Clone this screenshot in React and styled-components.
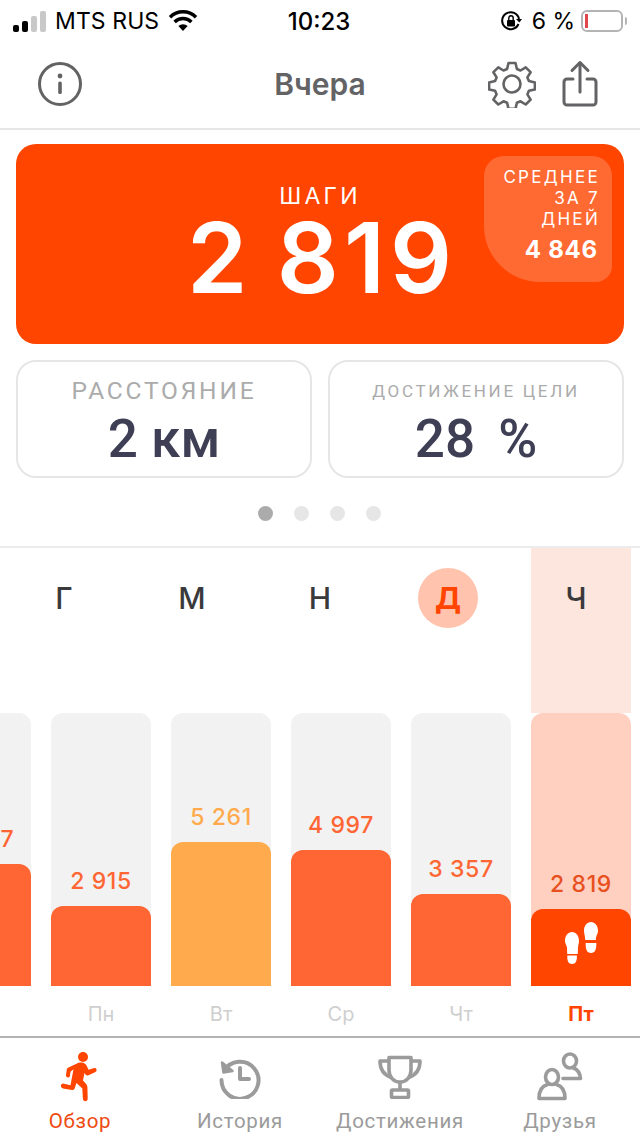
import React from 'react';
import styled, { createGlobalStyle } from 'styled-components';

const ORANGE = '#ff4500';
const letters = [
  { letter: 'Г' },
  { letter: 'М' },
  { letter: 'Н' },
  { letter: 'Д', circled: true },
  { letter: 'Ч' },
];
const days = [
  { day: '', value: '4 667', top: 122 },
  { day: 'Пн', value: '2 915', top: 80 },
  { day: 'Вт', value: '5 261', top: 144, best: true },
  { day: 'Ср', value: '4 997', top: 136 },
  { day: 'Чт', value: '3 357', top: 92 },
  { day: 'Пт', value: '2 819', top: 77, current: true },
];

const GlobalStyle = createGlobalStyle`
  html, body {
    margin: 0;
    background: #fff;
  }
  body {
    font-family: 'Inter', 'Liberation Sans', sans-serif;
  }
`;

export default function App() {
  return (
    <Page>
      <GlobalStyle />
      <StatusBar>
        <StatusLeft>
          <Signal>
            <SignalBar $h={7} $on />
            <SignalBar $h={11} $on />
            <SignalBar $h={16} />
            <SignalBar $h={21} />
          </Signal>
          <Carrier>MTS RUS</Carrier>
          <svg width="30" height="22" viewBox="0 0 30 22">
            <path d="M15 21l-4.600-5a6.600 6.600 0 0 1 9.200 0z" fill="#000" />
            <path d="M6.600 12a11.800 11.800 0 0 1 16.800 0" fill="none" stroke="#000" strokeWidth="3.400" />
            <path d="M2 7.200a18.400 18.400 0 0 1 26 0" fill="none" stroke="#000" strokeWidth="3.400" />
          </svg>
        </StatusLeft>
        <Clock>10:23</Clock>
        <StatusRight>
          <svg width="22" height="22" viewBox="0 0 22 22">
            <path d="M18.500 14A8.500 8.500 0 1 1 19 9" fill="none" stroke="#000" strokeWidth="2" />
            <path d="M16 9l3.400 3.600L22 9z" fill="#000" />
            <rect x="7" y="10" width="8" height="6.500" rx="1" fill="#000" />
            <path d="M8.800 10V8a2.200 2.200 0 0 1 4.400 0v2" fill="none" stroke="#000" strokeWidth="1.400" />
          </svg>
          <Percent>6 %</Percent>
          <Battery>
            <BatteryLevel />
          </Battery>
        </StatusRight>
      </StatusBar>

      <Header>
        <HeaderSide>
          <svg width="44" height="44" viewBox="0 0 44 44">
            <circle cx="22" cy="22" r="20.500" fill="none" stroke="#636366" strokeWidth="3" />
            <circle cx="22" cy="14" r="2.400" fill="#636366" />
            <rect x="20.200" y="19.500" width="3.600" height="12.500" rx="1.600" fill="#636366" />
          </svg>
        </HeaderSide>
        <Title>Вчера</Title>
        <HeaderActions>
          <svg width="48" height="48" viewBox="0 0 48 48" fill="none" stroke="#636366" strokeWidth="2.600" strokeLinejoin="round">
            <circle cx="24" cy="24" r="8.500" />
            <path d="M20.500 3h7l1.400 6 3.600 1.500 5.200-3.200 4.900 4.900-3.200 5.200 1.500 3.600 6 1.400v7l-6 1.400-1.500 3.600 3.200 5.200-4.900 4.900-5.200-3.200-3.600 1.500-1.400 6h-7l-1.400-6-3.600-1.500-5.200 3.200-4.900-4.900 3.200-5.200-1.500-3.600-6-1.400v-7l6-1.400 1.500-3.600-3.200-5.200 4.900-4.900 5.200 3.200 3.600-1.500z" />
          </svg>
          <svg width="36" height="48" viewBox="0 0 36 48" fill="none" stroke="#636366" strokeWidth="3" strokeLinecap="round" strokeLinejoin="round">
            <path d="M18 3v29" />
            <path d="M10 10.500L18 2.500l8 8" />
            <path d="M11 19H5a3 3 0 0 0-3 3v20a3 3 0 0 0 3 3h26a3 3 0 0 0 3-3V22a3 3 0 0 0-3-3h-6" />
          </svg>
        </HeaderActions>
      </Header>

      <Summary>
        <StepsCard>
          <StepsLabel>ШАГИ</StepsLabel>
          <StepsValue>2 819</StepsValue>
          <AverageBadge>
            <AverageLabel>СРЕДНЕЕ ЗА 7 ДНЕЙ</AverageLabel>
            <AverageValue>4 846</AverageValue>
          </AverageBadge>
        </StepsCard>
        <StatsRow>
          <StatCard>
            <StatLabel>РАССТОЯНИЕ</StatLabel>
            <StatValue>2 км</StatValue>
          </StatCard>
          <StatCard>
            <StatLabel $small>ДОСТИЖЕНИЕ ЦЕЛИ</StatLabel>
            <StatValue $wide>28 %</StatValue>
          </StatCard>
        </StatsRow>
        <Dots>
          <Dot $active />
          <Dot />
          <Dot />
          <Dot />
        </Dots>
      </Summary>

      <Chart>
        <WeekLetters>
          {letters.map(l => (
            <LetterCell key={l.letter}>
              <Letter $circled={l.circled}>{l.letter}</Letter>
            </LetterCell>
          ))}
        </WeekLetters>
        {days.map(d => (
          <Column key={d.day || 'prev'}>
            <ColumnHead $current={d.current} />
            <Track $current={d.current}>
              <BarValue $best={d.best} $current={d.current}>{d.value}</BarValue>
              <Bar $best={d.best} $current={d.current} style={{ height: d.top }}>
                {d.current && (
                  <svg width="33" height="42" viewBox="0 0 33 42" fill="#fff">
                    <path d="M7 10c4 0 7 3.500 7 9 0 2-.7 3.500-1 6.500l-.2 6.500H2.200L2 25.500C1.500 23 0 21.500 0 19c0-5.500 3-9 7-9z" />
                    <path d="M2.300 33.500h9.600c.2 5-1 8.500-4.800 8.500s-5-3.500-4.800-8.500z" />
                    <path d="M26 0c-4 0-7 3.500-7 9 0 2 .7 3.500 1 6.500l.2 2.500h10.600l.2-2.500c.5-2.500 2-4 2-6.500 0-5.500-3-9-7-9z" />
                    <path d="M20.700 21h10.600c.2 6-1 10-5.300 10s-5.500-4-5.300-10z" />
                  </svg>
                )}
              </Bar>
            </Track>
            <DayLabel $current={d.current}>{d.day}</DayLabel>
          </Column>
        ))}
      </Chart>

      <TabBar>
        <Tab $active>
          <TabIcon>
            <svg width="40" height="52" viewBox="0 0 40 52" fill={ORANGE}>
              <circle cx="23" cy="6" r="5" />
              <path d="M17 12.500c2-1.300 6-1.300 8 .2 1.500 1.200 2.500 3.500 3.500 6l5-1.500c1.200-.4 2.600 0 3 1.200.3 1.200-.3 2.300-1.500 2.800l-6.500 3c-1.500.6-2.800 0-3.400-1.200l-.6-1.300-1.500 7.800 3.200 3.500c.8 1 1.200 2 1.200 3.200l.3 11.600c0 1.500-1 2.500-2.400 2.500s-2.300-1-2.400-2.500l-.6-10.300-5.800-5.500-1.800 5.200c-.4 1.200-1.500 2-2.800 1.800L3 37.500c-1.500-.4-2.300-1.600-2-3 .3-1.500 1.500-2.200 3-1.800l6.500 1.500 3-16-3 2.500-.5 4c-.2 1.200-1.200 2-2.300 1.800-1.200-.2-1.900-1.200-1.700-2.400l.8-5.500c.1-.8.5-1.400 1.100-1.900z" />
            </svg>
          </TabIcon>
          <TabLabel>Обзор</TabLabel>
        </Tab>
        <Tab>
          <TabIcon>
            <svg width="44" height="44" viewBox="0 0 44 44" fill="none" stroke="#9b9b9b" strokeWidth="4" strokeLinecap="round" strokeLinejoin="round">
              <path d="M6 16A18.500 18.500 0 1 1 3.500 25" />
              <path d="M4 7.500l1.500 10 9-1.500z" fill="#9b9b9b" strokeWidth="2.500" />
              <path d="M22 13v11h9" />
            </svg>
          </TabIcon>
          <TabLabel>История</TabLabel>
        </Tab>
        <Tab>
          <TabIcon>
            <svg width="44" height="44" viewBox="0 0 44 44" fill="none" stroke="#9b9b9b" strokeWidth="3.600" strokeLinejoin="round">
              <path d="M11 2.500h22V15c0 7-4.500 12-11 12S11 22 11 15z" />
              <path d="M11 6H2c0 9 3.500 14 11.500 16.500M33 6h9c0 9-3.500 14-11.500 16.500" />
              <path d="M22 27v9" />
              <rect x="13.500" y="35" width="17" height="7.500" rx="1" />
            </svg>
          </TabIcon>
          <TabLabel>Достижения</TabLabel>
        </Tab>
        <Tab>
          <TabIcon>
            <svg width="46" height="50" viewBox="0 0 46 50" fill="none" stroke="#9b9b9b" strokeWidth="3.600" strokeLinecap="round" strokeLinejoin="round">
              <ellipse cx="33" cy="9" rx="6.500" ry="7" />
              <path d="M36.500 16c4 1.500 6.500 5 7 10.500H26" />
              <ellipse cx="15" cy="25" rx="6.500" ry="7.500" />
              <path d="M10.500 32.500C5 34 2 38.500 2 46.500h26c0-8-3-12.500-8.500-14" />
            </svg>
          </TabIcon>
          <TabLabel>Друзья</TabLabel>
        </Tab>
      </TabBar>
    </Page>
  );
}

const Page = styled.div`
  width: 640px;
  height: 1136px;
  overflow: hidden;
  display: flex;
  flex-direction: column;
  background: #fff;
`;

const StatusBar = styled.div`
  height: 42px;
  display: grid;
  grid-template-columns: 1fr auto 1fr;
  align-items: center;
  padding: 0 17px 0 13px;
  box-sizing: border-box;
  color: #000;
  font-size: 23px;
`;

const StatusLeft = styled.div`
  display: flex;
  align-items: center;
  gap: 9px;
`;

const Signal = styled.div`
  display: flex;
  align-items: flex-end;
  gap: 3px;
  height: 21px;
`;

const SignalBar = styled.div`
  width: 6px;
  height: ${p => p.$h}px;
  border-radius: 2px;
  background: ${p => (p.$on ? '#000' : '#c8c8c8')};
`;

const Carrier = styled.span`
  font-family: 'Inter', sans-serif;
  letter-spacing: 0.1px;
`;

const Clock = styled.span`
  font-weight: 500;
  font-size: 24px;
  margin-left: 2px;
`;

const StatusRight = styled.div`
  display: flex;
  align-items: center;
  justify-content: flex-end;
  gap: 8px;
`;

const Percent = styled.span`
  margin-left: 2px;
  margin-right: -2px;
`;

const Battery = styled.div`
  position: relative;
  width: 42px;
  height: 22px;
  box-sizing: border-box;
  border: 2px solid #b4b4b4;
  border-radius: 6px;
  padding: 2px;

  &::after {
    content: '';
    position: absolute;
    right: -6px;
    top: 5px;
    width: 2px;
    height: 8px;
    border-radius: 0 2px 2px 0;
    background: #b4b4b4;
  }
`;

const BatteryLevel = styled.div`
  width: 3px;
  height: 100%;
  background: #e0474c;
`;

const Header = styled.div`
  height: 88px;
  box-sizing: border-box;
  border-bottom: 2px solid #e6e6e6;
  padding: 0 38px 2px;
  display: grid;
  grid-template-columns: 1fr auto 1fr;
  align-items: center;
`;

const HeaderSide = styled.div`
  display: flex;
  align-items: center;
`;

const HeaderActions = styled.div`
  display: flex;
  align-items: center;
  justify-content: flex-end;
  gap: 26px;
  padding-right: 4px;
`;

const Title = styled.div`
  font-size: 30px;
  font-weight: 600;
  color: #636366;
`;

const Summary = styled.div`
  padding: 14px 16px 0;
  height: 418px;
  box-sizing: border-box;
  border-bottom: 2px solid #ececec;
`;

const StepsCard = styled.div`
  position: relative;
  height: 200px;
  border-radius: 20px;
  background: ${ORANGE};
  color: #fff;
  display: flex;
  flex-direction: column;
  align-items: center;
  padding-top: 38px;
  box-sizing: border-box;
`;

const StepsLabel = styled.div`
  font-size: 23px;
  line-height: 28px;
  letter-spacing: 3.200px;
`;

const StepsValue = styled.div`
  margin: 6px 0 0 4px;
  font-size: 97px;
  line-height: 84px;
  font-weight: 600;
  letter-spacing: 5px;
  word-spacing: -5px;
`;

const AverageBadge = styled.div`
  position: absolute;
  top: 12px;
  right: 12px;
  width: 128px;
  height: 126px;
  box-sizing: border-box;
  padding: 11px 14px 0 10px;
  border-radius: 20px 20px 16px 56px;
  background: rgba(255, 255, 255, 0.2);
  text-align: right;
`;

const AverageLabel = styled.div`
  font-size: 17px;
  line-height: 21px;
  letter-spacing: 2.300px;
  margin-right: -2px;
`;

const AverageValue = styled.div`
  margin-top: 5px;
  font-size: 24px;
  line-height: 30px;
  font-weight: 700;
  letter-spacing: 0.800px;
`;

const StatsRow = styled.div`
  display: grid;
  grid-template-columns: 1fr 1fr;
  gap: 16px;
  margin-top: 16px;
`;

const StatCard = styled.div`
  height: 118px;
  box-sizing: border-box;
  border: 2px solid #e6e6e6;
  border-radius: 20px;
  display: flex;
  flex-direction: column;
  align-items: center;
`;

const StatLabel = styled.div`
  height: 50px;
  line-height: 58px;
  color: #ababab;
  font-family: 'Roboto', sans-serif;
  font-size: ${p => (p.$small ? '17px' : '24.500px')};
  letter-spacing: ${p => (p.$small ? '2.700px' : '2.800px')};
`;

const StatValue = styled.div`
  font-family: 'Roboto', sans-serif;
  font-size: 53px;
  line-height: 54px;
  font-weight: 500;
  color: #3e3e55;
  word-spacing: ${p => (p.$wide ? '10px' : '0')};
`;

const Dots = styled.div`
  display: flex;
  justify-content: center;
  gap: 21px;
  margin-top: 28px;
  transform: translateX(-1px);
`;

const Dot = styled.div`
  width: 15px;
  height: 15px;
  border-radius: 50%;
  background: ${p => (p.$active ? '#ababab' : '#e6e6e6')};
`;

const Chart = styled.div`
  position: relative;
  height: 488px;
  display: flex;
  gap: 20px;
  margin-left: -69px;
`;

const WeekLetters = styled.div`
  position: absolute;
  top: 20px;
  left: 69px;
  width: 640px;
  display: grid;
  grid-template-columns: repeat(5, 1fr);
`;

const LetterCell = styled.div`
  display: flex;
  justify-content: center;
`;

const Letter = styled.div`
  width: 60px;
  height: 60px;
  border-radius: 50%;
  display: flex;
  align-items: center;
  justify-content: center;
  font-size: 30px;
  font-weight: ${p => (p.$circled ? 700 : 500)};
  color: ${p => (p.$circled ? ORANGE : '#3a3a3c')};
  background: ${p => (p.$circled ? '#ffc3ae' : 'transparent')};
`;

const Column = styled.div`
  width: 100px;
  flex: none;
  display: flex;
  flex-direction: column;
`;

const ColumnHead = styled.div`
  height: 165px;
  background: ${p => (p.$current ? '#fde6de' : 'transparent')};
`;

const Track = styled.div`
  height: 273px;
  border-radius: 12px 12px 0 0;
  background: ${p => (p.$current ? '#ffd0c0' : '#f2f2f2')};
  display: flex;
  flex-direction: column;
  justify-content: flex-end;
  align-items: stretch;
`;

const BarValue = styled.div`
  text-align: center;
  font-size: 23px;
  line-height: 28px;
  margin-bottom: 11px;
  letter-spacing: 0.600px;
  font-weight: 500;
  color: ${p => (p.$best ? '#ffaa4c' : p.$current ? '#e8501f' : '#ff6633')};
`;

const Bar = styled.div`
  border-radius: 12px 12px 0 0;
  background: ${p => (p.$best ? '#ffaa4c' : p.$current ? ORANGE : '#ff6633')};
  display: flex;
  justify-content: center;
  padding-top: 13px;
  box-sizing: border-box;
`;

const DayLabel = styled.div`
  height: 50px;
  display: flex;
  align-items: center;
  justify-content: center;
  padding-top: 6px;
  box-sizing: border-box;
  font-size: 20px;
  font-weight: ${p => (p.$current ? 700 : 400)};
  color: ${p => (p.$current ? ORANGE : '#cfcfcf')};
`;

const TabBar = styled.div`
  flex: 1;
  display: grid;
  grid-template-columns: repeat(4, 1fr);
  border-top: 2px solid #b4b4b4;
`;

const Tab = styled.div`
  display: flex;
  flex-direction: column;
  align-items: center;
  color: ${p => (p.$active ? '#ee4a10' : '#9b9b9b')};
`;

const TabIcon = styled.div`
  height: 71px;
  display: flex;
  align-items: center;
  justify-content: center;
  padding-top: 7px;
  box-sizing: border-box;
`;

const TabLabel = styled.div`
  font-family: 'Roboto', sans-serif;
  font-size: 20.500px;
  line-height: 24px;
  letter-spacing: 0.700px;
`;
